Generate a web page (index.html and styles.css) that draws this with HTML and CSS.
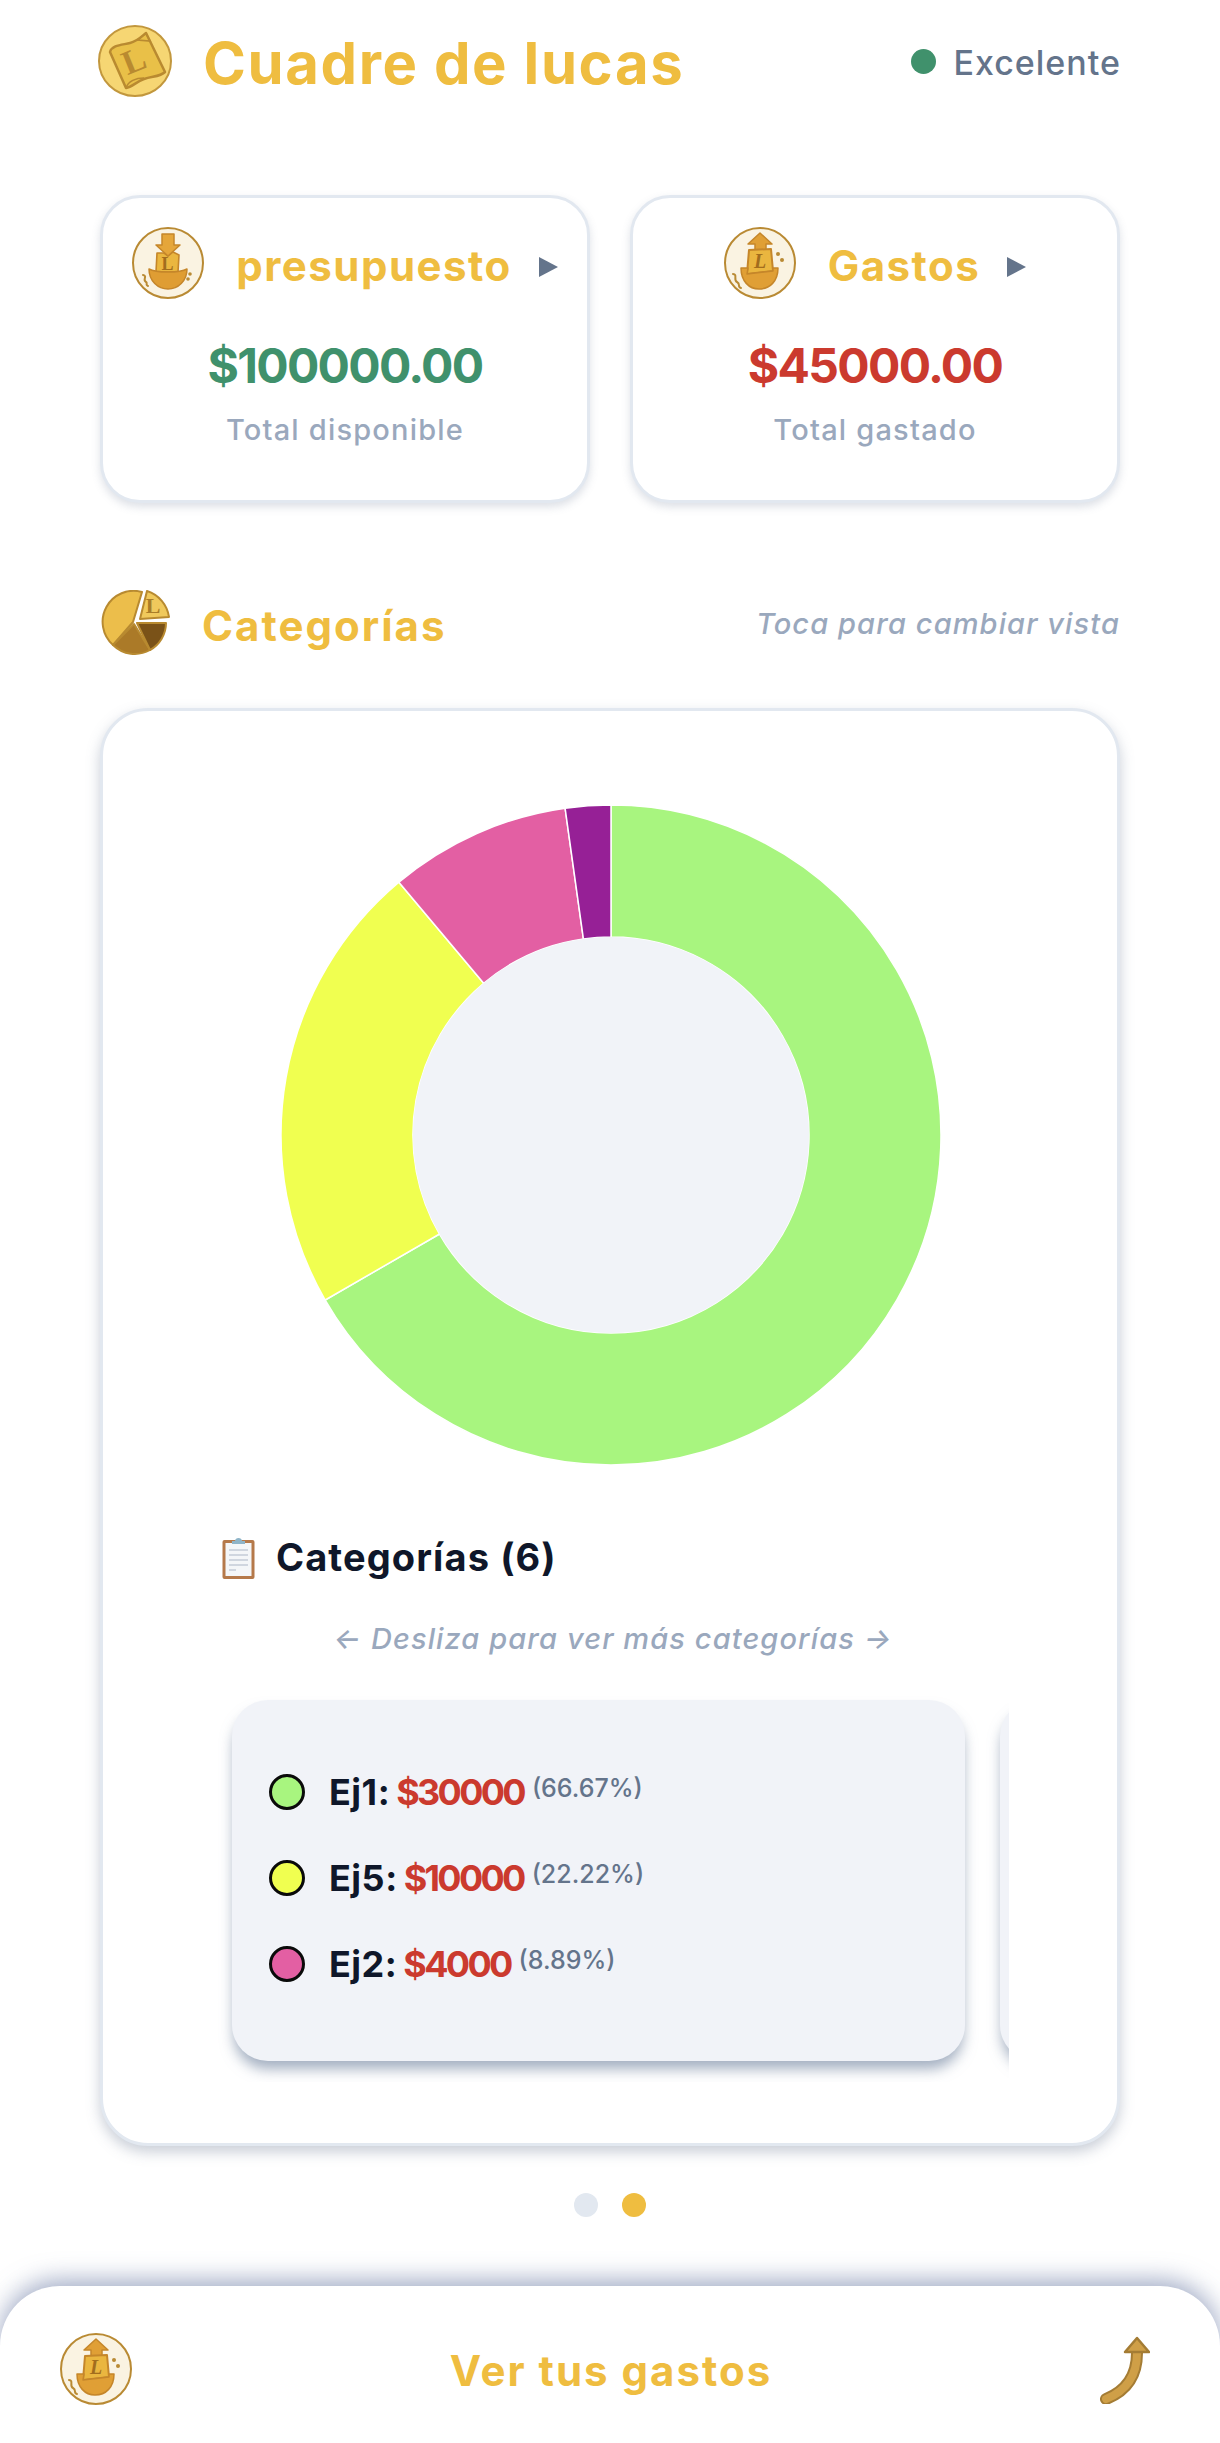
FILE: index.html
```html
<!DOCTYPE html>
<html lang="es">
<head>
<meta charset="utf-8">
<title>Cuadre de lucas</title>
<link rel="stylesheet" href="styles.css">
</head>
<body>
<div class="page">
  <header class="topbar">
    <div class="brand">
      <svg class="logo" viewBox="0 0 74 72" aria-hidden="true">
        <ellipse cx="37" cy="36" rx="36" ry="35" fill="#f6d673" stroke="#c2973d" stroke-width="2"/>
        <path d="M12 27 C14 20 24 20 32 18 C40 16 44 11 48 8 L67 47 C62 52 54 51 46 54 C38 57 34 62 28 63 Z" fill="#e9c048" stroke="#b98a30" stroke-width="2.5" stroke-linejoin="round"/>
        <path d="M40 15 L48 8 L52 16 Z M28 63 C30 56 38 53 46 53" fill="none" stroke="#b98a30" stroke-width="1.6"/>
        <text x="0" y="0" class="logo-l" transform="translate(40 46) rotate(-22)">L</text>
      </svg>
      <h1 class="title">Cuadre de lucas</h1>
    </div>
    <div class="status"><span class="status-dot"></span><span class="status-text">Excelente</span></div>
  </header>

  <section class="stats">
    <article class="stat">
      <div class="stat-head">
        <svg class="stat-ico" viewBox="0 0 72 72" aria-hidden="true">
          <circle cx="36" cy="36" r="35" fill="#faf3e2" stroke="#b98a33" stroke-width="2"/>
          <path d="M25 26 H32 L36 29 L41 25 L47 28 L46 45 H24 Z" fill="#eab63f" stroke="#c5862a" stroke-width="1.6" stroke-linejoin="round"/>
          <path d="M30 7 H42 V18 H48 L36 29 L24 18 H30 Z" fill="#e5a63a" stroke="#c5862a" stroke-width="1.5" stroke-linejoin="round"/>
          <text x="35.5" y="43" class="ico-l ico-l-sm">L</text>
          <path d="M17 42 C24 46 48 46 55 42 C55 54 46 62 36 62 C26 62 17 54 17 42 Z" fill="#df9d33" stroke="#c5862a" stroke-width="1.5" stroke-linejoin="round"/>
          <path d="M11 48 C16 49 10 53 14 55 C16 56 13 58 16 59" fill="none" stroke="#b98a33" stroke-width="2" stroke-linecap="round"/>
          <circle cx="58" cy="47" r="1.8" fill="#b98a33"/>
          <circle cx="56" cy="52" r="1.8" fill="#b98a33"/>
        </svg>
        <h2 class="stat-name">presupuesto</h2>
        <span class="tri"></span>
      </div>
      <p class="amount amount-green">$100000.00</p>
      <p class="stat-label">Total disponible</p>
    </article>
    <article class="stat">
      <div class="stat-head">
        <svg class="stat-ico" viewBox="0 0 72 72" aria-hidden="true">
          <circle cx="36" cy="36" r="35" fill="#faf3e2" stroke="#b98a33" stroke-width="2"/>
          <path d="M36 6 L48 17 H42 V23 H31 V17 H24 Z" fill="#e09f35" stroke="#c5862a" stroke-width="1.5" stroke-linejoin="round"/>
          <path d="M25 23 L47 22 L49 44 L23 47 Z" fill="#eab63f" stroke="#c5862a" stroke-width="2" stroke-linejoin="round"/>
          <text x="36" y="41" class="ico-l ico-l-it">L</text>
          <path d="M17 41 H24 L23 47 L49 44 V41 H54 C54 54 46 62 35 62 C25 62 17 54 17 41 Z" fill="#e09f35" stroke="#c5862a" stroke-width="1.5" stroke-linejoin="round"/>
          <path d="M9 47 C14 47 9 53 13 55 C17 57 13 60 17 61" fill="none" stroke="#b98a33" stroke-width="2" stroke-linecap="round"/>
          <circle cx="54" cy="27" r="2" fill="#b98a33"/>
          <circle cx="58" cy="33" r="2" fill="#b98a33"/>
        </svg>
        <h2 class="stat-name">Gastos</h2>
        <span class="tri"></span>
      </div>
      <p class="amount amount-red">$45000.00</p>
      <p class="stat-label">Total gastado</p>
    </article>
  </section>

  <section class="cat-head">
    <div class="cat-title-wrap">
      <svg class="pie-ico" viewBox="0 0 72 68" aria-hidden="true">
        <path d="M42 2 L33 32 L13 55 A31 31 0 0 1 42 2 Z" fill="#ecbe4b" stroke="#b88a30" stroke-width="2" stroke-linejoin="round"/>
        <path d="M34 34 L13 55 A31 31 0 0 0 50 60 Z" fill="#ab7a28" stroke="#b88a30" stroke-width="2" stroke-linejoin="round"/>
        <path d="M37 33 H66 A31 31 0 0 1 50 60 Z" fill="#7a5218" stroke="#b88a30" stroke-width="2" stroke-linejoin="round"/>
        <path d="M40 29 L47 1 A32 32 0 0 1 69 27 Z" fill="#f0c95c" stroke="#b88a30" stroke-width="2" stroke-linejoin="round"/>
        <text x="53" y="23" class="pie-l">L</text>
      </svg>
      <h2 class="cat-title">Categorías</h2>
    </div>
    <span class="cat-hint">Toca para cambiar vista</span>
  </section>

  <section class="panel">
    <svg class="donut" viewBox="0 0 660 660" aria-hidden="true">
      <g stroke="#ffffff" stroke-width="1.5" stroke-linejoin="round">
        <path d="M330 0 A330 330 0 1 1 44.2 495 L158.5 429 A198 198 0 1 0 330 132 Z" fill="#a8f57f"/>
        <path d="M44.2 495 A330 330 0 0 1 117.9 77.2 L202.7 178.3 A198 198 0 0 0 158.5 429 Z" fill="#f0ff50"/>
        <path d="M117.9 77.2 A330 330 0 0 1 284.1 3.2 L302.4 133.9 A198 198 0 0 0 202.7 178.3 Z" fill="#e35fa3"/>
        <path d="M284.1 3.2 A330 330 0 0 1 330 0 L330 132 A198 198 0 0 0 302.4 133.9 Z" fill="#962096"/>
      </g>
      <circle cx="330" cy="330" r="198" fill="#f1f3f8"/>
    </svg>

    <div class="legend-title">
      <svg class="clip-ico" viewBox="0 0 33 43" aria-hidden="true">
        <rect x="0.5" y="4" width="32" height="39" rx="2" fill="#b5794a"/>
        <rect x="3.5" y="7" width="26" height="33" fill="#f4f6f8"/>
        <path d="M7 14 H26 M7 19 H26 M7 24 H26 M7 29 H26 M7 34 H14" stroke="#c3ccd6" stroke-width="1.4"/>
        <path d="M10 8 V5 H13 C13 1 20 1 20 5 H23 V8 Z" fill="#8eb4c8"/>
      </svg>
      <h3 class="legend-text">Categorías (6)</h3>
    </div>
    <p class="swipe">← Desliza para ver más categorías →</p>

    <div class="carousel">
      <div class="slide">
        <div class="row"><span class="swatch swatch-green"></span><span class="row-name">Ej1:</span><span class="row-amt">$30000</span><span class="row-pct">(66.67%)</span></div>
        <div class="row"><span class="swatch swatch-yellow"></span><span class="row-name">Ej5:</span><span class="row-amt">$10000</span><span class="row-pct">(22.22%)</span></div>
        <div class="row"><span class="swatch swatch-pink"></span><span class="row-name">Ej2:</span><span class="row-amt">$4000</span><span class="row-pct">(8.89%)</span></div>
      </div>
      <div class="slide"></div>
    </div>
  </section>

  <div class="pager"><span class="pip"></span><span class="pip pip-on"></span></div>

  <footer class="bar">
    <svg class="bar-ico" viewBox="0 0 72 72" aria-hidden="true">
      <circle cx="36" cy="36" r="35" fill="#faf3e2" stroke="#b98a33" stroke-width="2"/>
      <path d="M36 6 L48 17 H42 V23 H31 V17 H24 Z" fill="#e09f35" stroke="#c5862a" stroke-width="1.5" stroke-linejoin="round"/>
      <path d="M25 23 L47 22 L49 44 L23 47 Z" fill="#eab63f" stroke="#c5862a" stroke-width="2" stroke-linejoin="round"/>
      <text x="36" y="41" class="ico-l ico-l-it">L</text>
      <path d="M17 41 H24 L23 47 L49 44 V41 H54 C54 54 46 62 35 62 C25 62 17 54 17 41 Z" fill="#e09f35" stroke="#c5862a" stroke-width="1.5" stroke-linejoin="round"/>
      <path d="M9 47 C14 47 9 53 13 55 C17 57 13 60 17 61" fill="none" stroke="#b98a33" stroke-width="2" stroke-linecap="round"/>
      <circle cx="54" cy="27" r="2" fill="#b98a33"/>
      <circle cx="58" cy="33" r="2" fill="#b98a33"/>
    </svg>
    <span class="bar-text">Ver tus gastos</span>
    <svg class="bar-arrow" viewBox="0 0 50 70" aria-hidden="true">
      <path d="M37 19 C37 42 26 57 6 65" fill="none" stroke="#a47c34" stroke-width="12" stroke-linecap="round"/>
      <path d="M37 19 C37 42 26 57 6 65" fill="none" stroke="#cf9f47" stroke-width="8" stroke-linecap="round"/>
      <path d="M37 4 L49 18 H25 Z" fill="#cf9f47" stroke="#a47c34" stroke-width="2.5" stroke-linejoin="round"/>
    </svg>
  </footer>
</div>
</body>
</html>
```

FILE: styles.css
```css
* { box-sizing: border-box; margin: 0; padding: 0; }
html, body { background: #ffffff; }
body { font-family: "Inter", "Liberation Sans", sans-serif; }
.page { width: 1220px; height: 2443px; overflow: hidden; display: flex; flex-direction: column; background: #fff; }

.topbar { height: 122px; padding: 0 99px 0 98px; display: flex; align-items: center; justify-content: space-between; flex: none; }
.brand { display: flex; align-items: center; gap: 31px; }
.logo { width: 74px; height: 72px; display: block; }
.logo-l { font-family: "Liberation Serif", serif; font-weight: 700; font-size: 34px; text-anchor: middle; fill: #b98a30; }
.title { font-size: 58px; line-height: 70px; font-weight: 700; color: #efbd40; letter-spacing: 1.6px; margin-top: 4px; }
.status { display: flex; align-items: center; gap: 17px; }
.status-dot { width: 25px; height: 25px; border-radius: 50%; background: #40916c; }
.status-text { font-size: 34px; line-height: 40px; font-weight: 500; color: #64748b; letter-spacing: 1px; margin-top: 3px; }

.stats { margin-top: 73px; padding: 0 100px; display: grid; grid-template-columns: 490px 490px; gap: 40px; flex: none; }
.stat { height: 308px; background: #fff; border: 3px solid #e2e8f0; border-radius: 40px; box-shadow: 0 4px 8px rgba(100, 116, 139, .22); display: flex; flex-direction: column; align-items: center; padding-top: 29px; }
.stat-head { height: 72px; display: flex; align-items: center; gap: 32px; }
.stat-ico { width: 72px; height: 72px; display: block; flex: none; }
.ico-l { font-family: "Liberation Serif", serif; font-weight: 700; font-size: 20px; text-anchor: middle; fill: #a26d1d; }
.ico-l-it { font-style: italic; }
.ico-l-sm { font-size: 18px; }
.stat-name { font-size: 42px; line-height: 52px; font-weight: 700; color: #efbd40; margin-top: 5px; letter-spacing: 1.5px; }
.tri { width: 0; height: 0; border-left: 19px solid #64748b; border-top: 10px solid transparent; border-bottom: 10px solid transparent; margin-left: -5px; margin-top: 8px; }
.amount { margin-top: 36px; font-size: 48px; line-height: 62px; font-weight: 700; letter-spacing: -1.7px; }
.amount-green { color: #40916c; }
.amount-red { color: #cb3a2e; }
.stat-label { margin-top: 15px; font-size: 29px; line-height: 36px; font-weight: 500; color: #9aa8bd; letter-spacing: 1.2px; }

.cat-head { margin-top: 87px; height: 68px; padding: 0 100px 0 100px; display: flex; align-items: center; justify-content: space-between; flex: none; }
.cat-title-wrap { display: flex; align-items: center; gap: 30px; }
.pie-ico { width: 72px; height: 68px; display: block; }
.pie-l { font-family: "Liberation Serif", serif; font-weight: 700; font-size: 22px; text-anchor: middle; fill: #a97d28; }
.cat-title { font-size: 42px; line-height: 52px; font-weight: 700; color: #efbd40; margin-top: 4px; letter-spacing: 2px; }
.cat-hint { font-size: 29px; line-height: 36px; font-style: italic; font-weight: 500; color: #9aa8bd; letter-spacing: 1.1px; }

.panel { margin: 50px 100px 0; height: 1438px; background: #fff; border: 3px solid #e2e8f0; border-radius: 48px; box-shadow: 0 6px 14px rgba(100, 116, 139, .35); padding: 94px 0 0; flex: none; display: flex; flex-direction: column; }
.donut { width: 660px; height: 660px; display: block; margin-left: 178px; flex: none; }
.legend-title { margin: 68px 0 0 119px; height: 48px; display: flex; align-items: center; gap: 21px; }
.clip-ico { width: 33px; height: 43px; display: block; }
.legend-text { font-size: 38px; line-height: 48px; font-weight: 700; color: #0f172a; letter-spacing: 1.1px; }
.swipe { margin-top: 40px; text-align: center; font-size: 29px; line-height: 36px; font-style: italic; font-weight: 500; color: #9aa8bd; padding-left: 6px; letter-spacing: 1.1px; }
.carousel { margin: 15px 108px 0 113px; height: 410px; padding: 28px 0 0 16px; overflow: hidden; display: flex; gap: 35px; flex: none; }
.slide { width: 733px; height: 361px; flex: none; background: #f1f3f8; border-radius: 36px; box-shadow: 0 10px 14px -2px rgba(100, 120, 150, .6); padding: 74px 0 0 37px; display: flex; flex-direction: column; gap: 50px; }
.row { height: 36px; display: flex; align-items: center; }
.swatch { width: 36px; height: 36px; border-radius: 50%; border: 3px solid #0a0a0a; flex: none; margin-right: 24px; }
.swatch-green { background: #a8f57f; }
.swatch-yellow { background: #f0ff50; }
.swatch-pink { background: #e35fa3; }
.row-name { font-size: 36px; font-weight: 700; color: #0f172a; margin-right: 6px; line-height: 44px; letter-spacing: 0.5px; }
.row-amt { font-size: 36px; font-weight: 700; color: #cb3a2e; margin-right: 8px; line-height: 44px; letter-spacing: -2.7px; }
.row-pct { font-size: 25px; font-weight: 500; color: #64748b; line-height: 30px; margin-top: -8px; }

.pager { margin-top: 47px; height: 24px; display: flex; justify-content: center; gap: 24px; flex: none; }
.pip { width: 24px; height: 24px; border-radius: 50%; background: #e2e8f0; }
.pip-on { background: #efbd40; }

.bar { margin-top: 69px; height: 157px; flex: none; background: #fff; border-radius: 60px 60px 0 0; box-shadow: 0 -6px 24px rgba(100, 116, 160, .6); padding: 8px 70px 0 60px; display: grid; grid-template-columns: 1fr auto 1fr; align-items: center; }
.bar-ico { width: 72px; height: 72px; display: block; }
.bar-text { font-size: 42px; line-height: 52px; font-weight: 700; color: #efbd40; letter-spacing: 2px; margin: 4px 0 0 12px; }
.bar-arrow { width: 50px; height: 70px; display: block; justify-self: end; }
```
